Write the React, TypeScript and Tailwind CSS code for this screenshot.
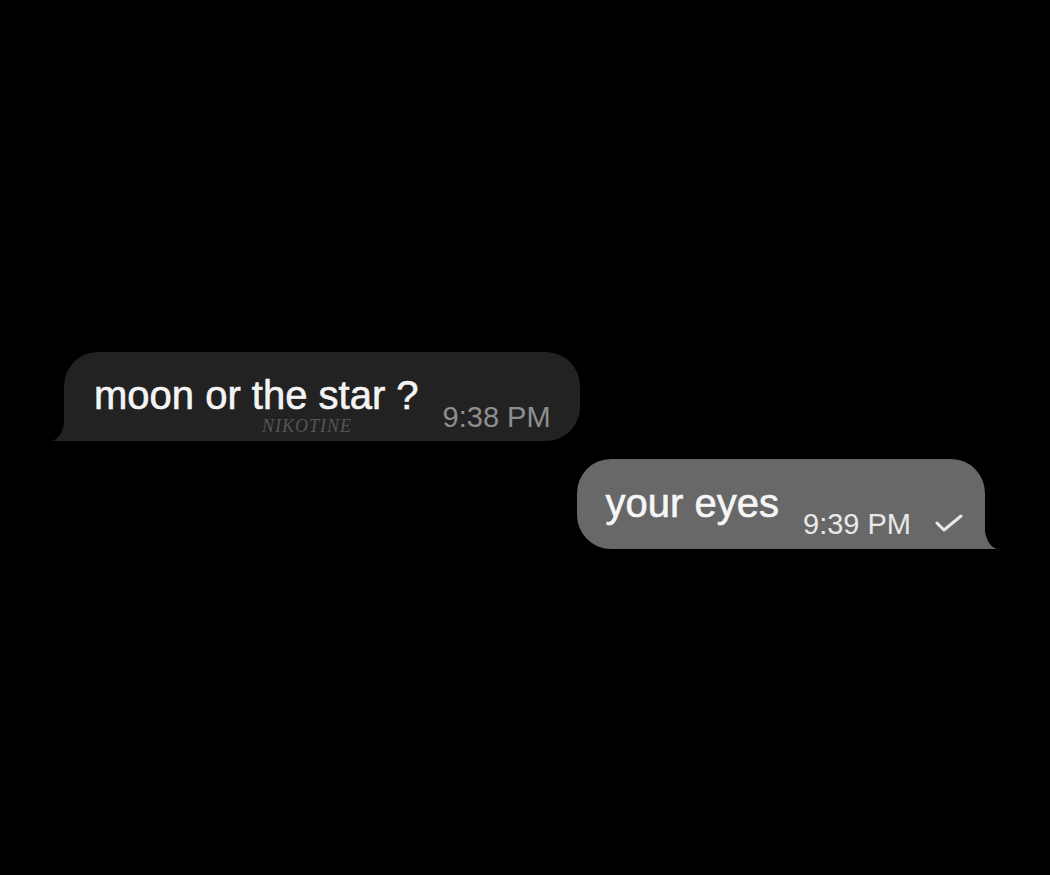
import React from "react";

export default function App() {
  return (
    <div
      className="w-[1050px] h-[875px] bg-black overflow-hidden flex flex-col pt-[352px]"
      style={{ fontFamily: '"Liberation Sans", Arial, sans-serif' }}
    >
      {/* incoming bubble */}
      <div className="pl-[64px] flex">
        <div className="relative h-[89px] bg-[#222222] rounded-[34px] rounded-bl-none flex items-start pl-[30px] pr-[29px]">
          <svg
            className="absolute left-[-12px] bottom-0"
            width="13"
            height="26"
            viewBox="0 0 13 26"
          >
            <path d="M13 0 L13 26 L0 26 C6 24 12 18 13 0 Z" fill="#222222" />
          </svg>
          <span className="mt-[23px] text-[40px] leading-[40px] text-[#f4f4f4] whitespace-nowrap [-webkit-text-stroke:0.6px_#f4f4f4]">
            moon or the star ?
          </span>
          <span className="mt-[51px] ml-[24px] text-[29px] leading-[29px] text-[#8e8e8e] whitespace-nowrap">
            9:38 PM
          </span>
          <span
            className="absolute left-[198px] top-[65px] text-[18px] leading-[18px] italic tracking-[1px] text-[#555555] whitespace-nowrap"
            style={{ fontFamily: '"Liberation Serif", "DejaVu Serif", serif' }}
          >
            NIKOTINE
          </span>
        </div>
      </div>

      {/* outgoing bubble */}
      <div className="mt-[18px] pr-[65px] flex justify-end">
        <div className="relative h-[90px] bg-[#686868] rounded-[34px] rounded-br-none flex items-start pl-[29px] pr-[22px]">
          <svg
            className="absolute right-[-12px] bottom-0"
            width="13"
            height="26"
            viewBox="0 0 13 26"
          >
            <path d="M0 0 L0 26 L13 26 C7 24 1 18 0 0 Z" fill="#686868" />
          </svg>
          <span className="mt-[24px] text-[40px] leading-[40px] text-[#f6f6f6] whitespace-nowrap [-webkit-text-stroke:0.6px_#f6f6f6]">
            your eyes
          </span>
          <span className="mt-[51px] ml-[24px] text-[29px] leading-[29px] text-[#e8e8e8] whitespace-nowrap">
            9:39 PM
          </span>
          <svg
            className="mt-[55px] ml-[24px]"
            width="28"
            height="18"
            viewBox="0 0 28 18"
            fill="none"
          >
            <path
              d="M2 9 L9 16 L26 2"
              stroke="#e8e8e8"
              strokeWidth="3"
              strokeLinecap="round"
              strokeLinejoin="round"
            />
          </svg>
        </div>
      </div>
    </div>
  );
}
